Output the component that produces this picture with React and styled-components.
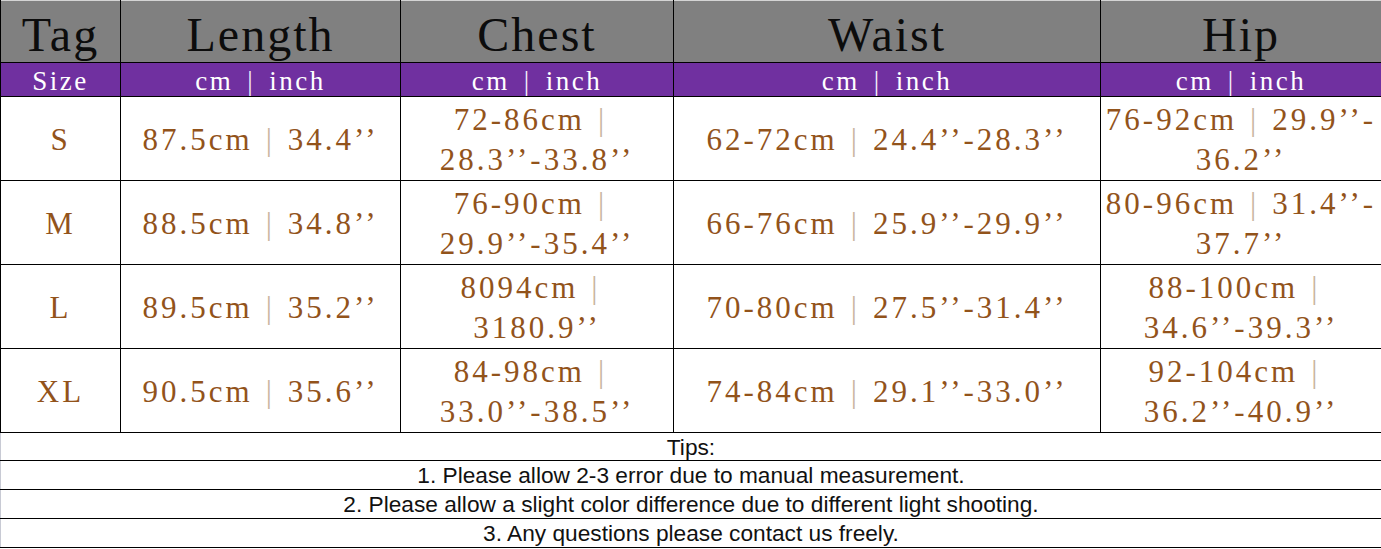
import React from "react";
import styled, { createGlobalStyle } from "styled-components";

const GlobalStyle = createGlobalStyle`
  html, body {
    margin: 0;
    padding: 0;
    background: #ffffff;
  }
`;

const columns = [120, 280, 273, 427, 281];

const heads = ["Tag", "Length", "Chest", "Waist", "Hip"];

// each cell is a list of lines, each line is [cm, inch] (inch may be empty)
const rows = [
  {
    size: "S",
    cells: [
      [["87.5cm", "34.4’’"]],
      [["72-86cm", ""], ["28.3’’-33.8’’"]],
      [["62-72cm", "24.4’’-28.3’’"]],
      [["76-92cm", "29.9’’-"], ["36.2’’"]],
    ],
  },
  {
    size: "M",
    cells: [
      [["88.5cm", "34.8’’"]],
      [["76-90cm", ""], ["29.9’’-35.4’’"]],
      [["66-76cm", "25.9’’-29.9’’"]],
      [["80-96cm", "31.4’’-"], ["37.7’’"]],
    ],
  },
  {
    size: "L",
    cells: [
      [["89.5cm", "35.2’’"]],
      [["8094cm", ""], ["3180.9’’"]],
      [["70-80cm", "27.5’’-31.4’’"]],
      [["88-100cm", ""], ["34.6’’-39.3’’"]],
    ],
  },
  {
    size: "XL",
    cells: [
      [["90.5cm", "35.6’’"]],
      [["84-98cm", ""], ["33.0’’-38.5’’"]],
      [["74-84cm", "29.1’’-33.0’’"]],
      [["92-104cm", ""], ["36.2’’-40.9’’"]],
    ],
  },
];

const tips = [
  "Tips:",
  "1. Please allow 2-3 error due to manual measurement.",
  "2. Please allow a slight color difference due to different light shooting.",
  "3. Any questions please contact us freely.",
];

export default function App() {
  return (
    <>
      <GlobalStyle />
      <Table>
        <colgroup>
          {columns.map((w, i) => (
            <col key={i} style={{ width: w }} />
          ))}
        </colgroup>
        <tbody>
          <HeadRow>
            {heads.map((h) => (
              <HeadCell key={h}>{h}</HeadCell>
            ))}
          </HeadRow>
          <UnitRow>
            <UnitCell>Size</UnitCell>
            {heads.slice(1).map((h) => (
              <UnitCell key={h}>
                cm<UnitBar>|</UnitBar>inch
              </UnitCell>
            ))}
          </UnitRow>
          {rows.map((row) => (
            <DataRow key={row.size}>
              <DataCell>{row.size}</DataCell>
              {row.cells.map((lines, i) => (
                <DataCell key={i}>
                  {lines.map((line, j) => (
                    <Line key={j}>
                      {line[0]}
                      {line.length > 1 && <Bar>|</Bar>}
                      {line[1]}
                    </Line>
                  ))}
                </DataCell>
              ))}
            </DataRow>
          ))}
          {tips.map((t, i) => (
            <TipRow key={i} $first={i === 0}>
              <TipCell colSpan={5}>{t}</TipCell>
            </TipRow>
          ))}
        </tbody>
      </Table>
    </>
  );
}

const Table = styled.table`
  width: 1381px;
  table-layout: fixed;
  border-collapse: collapse;
  border-top: 1px solid #d4d4d4;
  border-left: 1px solid #c8cad4;
  border-right: 1px solid #000;
  border-bottom: 1px solid #000;
`;

const HeadRow = styled.tr`
  height: 62px;
  background: #808080;
`;

const HeadCell = styled.td`
  padding: 7px 0 0;
  border: 1px solid #000;
  border-top: none;
  text-align: center;
  vertical-align: middle;
  font-family: "Liberation Serif", "Times New Roman", serif;
  font-size: 48px;
  letter-spacing: 2px;
  line-height: 50px;
  color: #0c0c0c;
`;

const UnitRow = styled.tr`
  height: 34px;
  background: #7030a0;
`;

const UnitCell = styled.td`
  padding: 3px 0 0;
  border: 1px solid #000;
  text-align: center;
  vertical-align: middle;
  font-family: "Liberation Serif", "Times New Roman", serif;
  font-size: 27px;
  letter-spacing: 2.5px;
  line-height: 29px;
  color: #ffffff;
  white-space: nowrap;
`;

const UnitBar = styled.span`
  margin: 0 14px;
  font-weight: 300;
  color: #f4eefa;
`;

const DataRow = styled.tr`
  height: 84px;
  background: #ffffff;
`;

const DataCell = styled.td`
  padding: 3px 0 0;
  border: 1px solid #000;
  text-align: center;
  vertical-align: middle;
  font-family: "Liberation Serif", "Times New Roman", serif;
  font-size: 31px;
  letter-spacing: 3px;
  color: #92531b;
  white-space: nowrap;
  overflow: hidden;
`;

const Line = styled.div`
  line-height: 40px;
`;

const Bar = styled.span`
  margin: 0 13px;
  color: #c9b4a0;
`;

const TipRow = styled.tr`
  height: ${(p) => (p.$first ? "28px" : "29px")};
  background: #ffffff;
`;

const TipCell = styled.td`
  padding: 0;
  border: 1px solid #000;
  border-left: none;
  text-align: center;
  vertical-align: middle;
  font-family: "Liberation Sans", Arial, sans-serif;
  font-size: 22.7px;
  line-height: 24px;
  color: #111111;
`;
